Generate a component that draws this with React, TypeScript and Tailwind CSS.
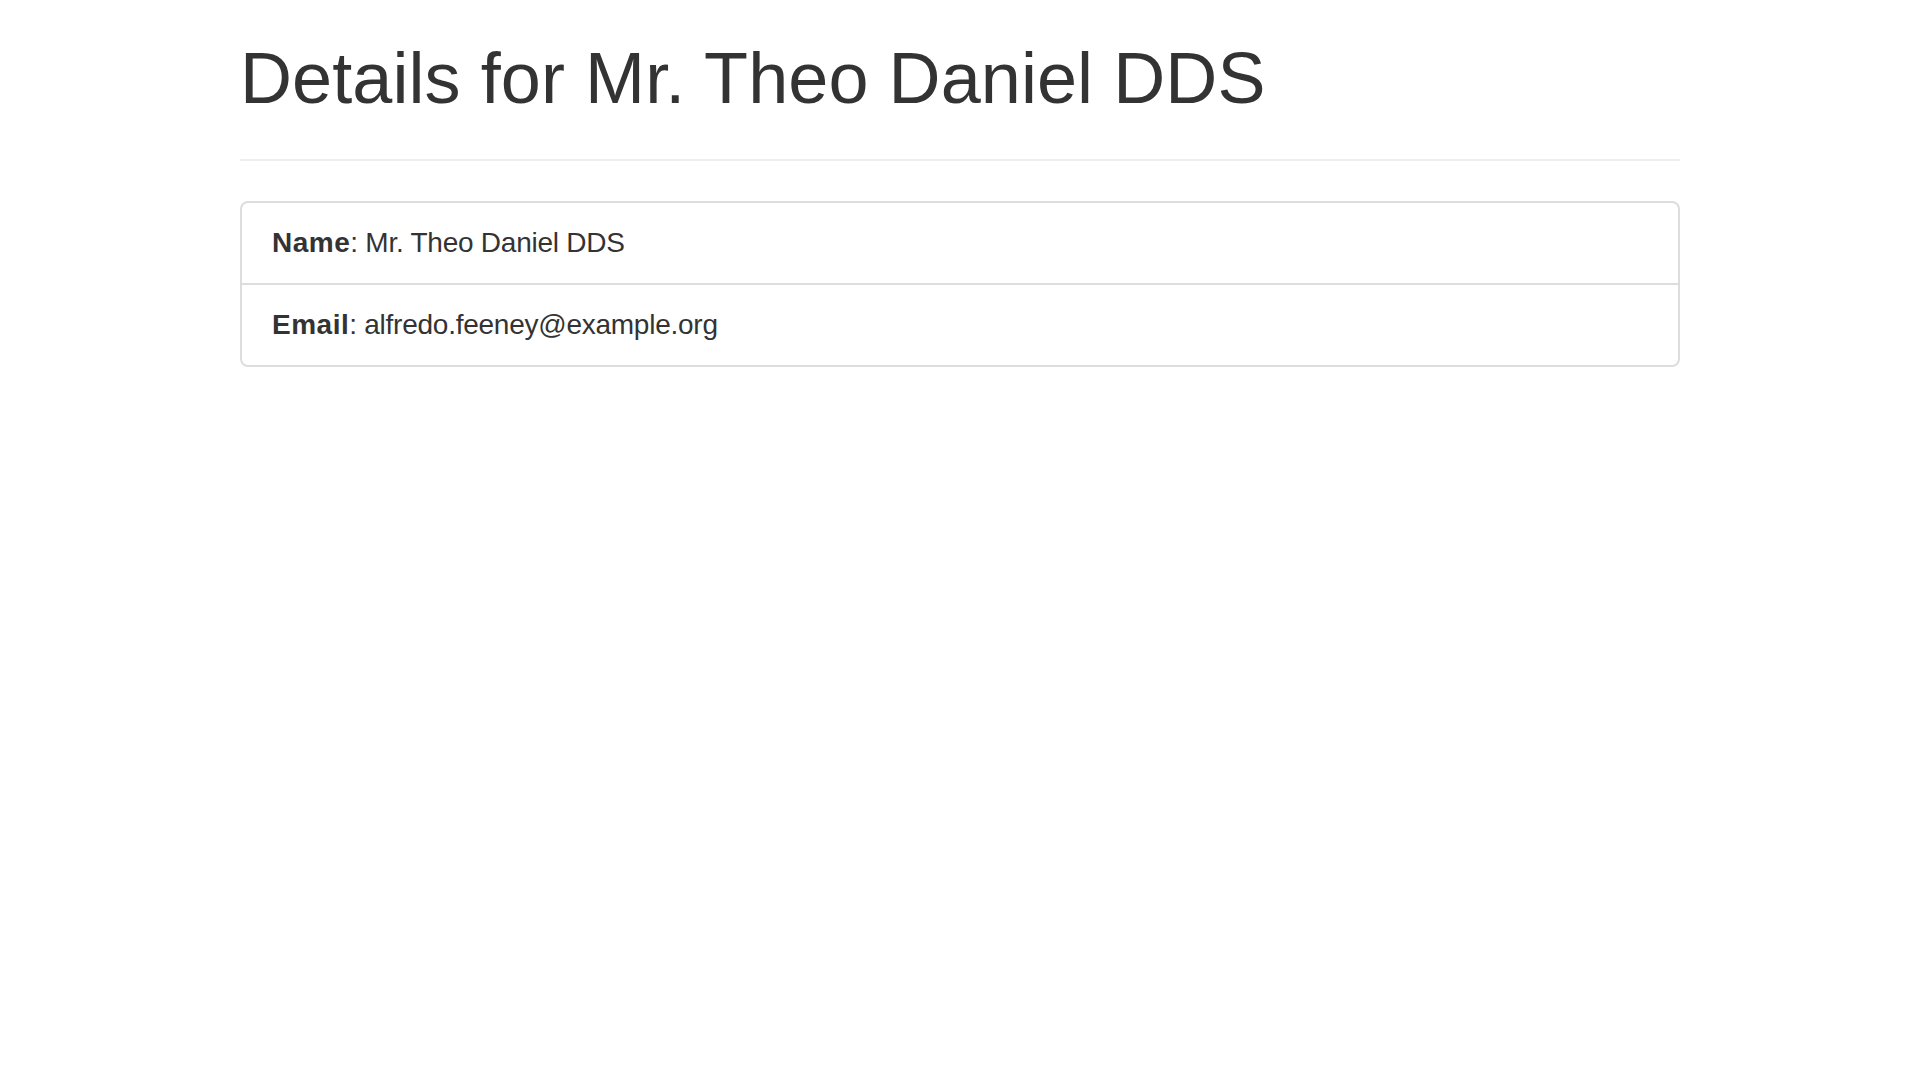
export default function App() {
	const rows = [
		{ label: 'Name', value: 'Mr. Theo Daniel DDS' },
		{ label: 'Email', value: 'alfredo.feeney@example.org' },
	];

	return (
		<div className="min-h-screen bg-white px-[240px] pt-[39px] text-[#333] font-['Liberation_Sans',Arial,sans-serif]">
			<div className="border-b-2 border-[#eee] pb-[41px]">
				<h1 className="text-[72px] leading-[79px] font-normal tracking-[0.08px]">
					Details for Mr. Theo Daniel DDS
				</h1>
			</div>

			<ul className="mt-[40px] rounded-[8px] border-2 border-[#ddd]">
				{rows.map((row, i) => (
					<li
						key={row.label}
						className={`px-[30px] py-[20px] text-[28px] leading-[40px] ${i > 0 ? 'border-t-2 border-[#ddd]' : ''}`}
					>
						<strong className="font-bold tracking-[0.5px]">{row.label}</strong>
						<span className="tracking-[-0.25px]">: {row.value}</span>
					</li>
				))}
			</ul>
		</div>
	);
}
